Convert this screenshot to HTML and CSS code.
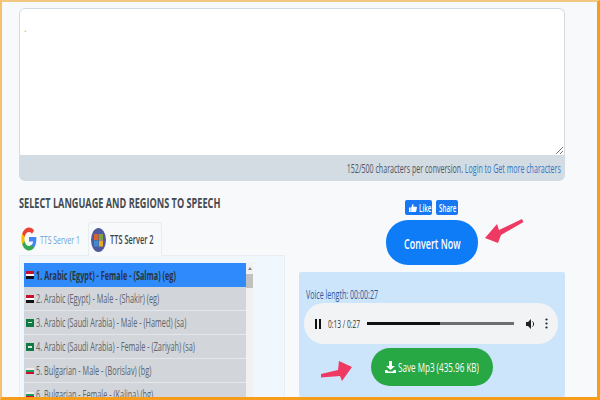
FILE: index.html
```html
<!DOCTYPE html>
<html lang="en">
<head>
<meta charset="utf-8">
<title>TTS</title>
<link rel="stylesheet" href="styles.css">
</head>
<body>
<div class="frame">
  <section class="editor">
    <div class="textbox"><span class="caret">.</span>
      <svg class="grip" width="7" height="7" viewBox="0 0 7 7"><path d="M0 7 7 0M4 7 7 4" stroke="#777" fill="none"/></svg>
    </div>
    <div class="editor-foot"><span class="narrow">152/500 characters per conversion. <a class="link">Login to Get more characters</a></span></div>
  </section>
  <div class="columns">
    <section class="left">
      <h2 class="heading"><span class="narrow">SELECT LANGUAGE AND REGIONS TO SPEECH</span></h2>
      <div class="tabs">
        <div class="tab">
          <svg class="g-logo" width="16" height="24" viewBox="0 0 48 48" preserveAspectRatio="none">
            <path fill="#4285F4" d="M46 24.500c0-1.600-.14-3.100-.4-4.500H24v8.800h12.400c-.5 2.900-2.100 5.300-4.600 7v5.800h7.400C43.500 37.600 46 31.600 46 24.500z"/>
            <path fill="#34A853" d="M24 47c6.200 0 11.400-2 15.200-5.500l-7.400-5.800c-2 1.400-4.700 2.200-7.800 2.200-6 0-11.100-4-12.900-9.500H3.500v6C7.300 42 15 47 24 47z"/>
            <path fill="#FBBC05" d="M11.100 28.400c-.5-1.400-.7-2.900-.7-4.400s.3-3 .7-4.400v-6H3.500C2 16.700 1 20.200 1 24s1 7.300 2.500 10.400z"/>
            <path fill="#EA4335" d="M24 10.100c3.400 0 6.400 1.200 8.800 3.400l6.600-6.600C35.400 3.200 30.200 1 24 1 15 1 7.300 6 3.500 13.600l7.600 6C12.900 14.100 18 10.100 24 10.100z"/>
          </svg>
          <span class="narrow tab-link">TTS Server 1</span>
        </div>
        <div class="tab tab-active">
          <svg class="ms-logo" width="15" height="24" viewBox="0 0 15 24">
            <ellipse cx="7.500" cy="12" rx="7.500" ry="12" fill="#4f5a9e"/>
            <rect x="3" y="6" width="4.500" height="6" fill="#d9622b"/>
            <rect x="8" y="6" width="4" height="6" fill="#7fa33a"/>
            <rect x="3" y="12.500" width="4.500" height="6" fill="#3d8bc9"/>
            <rect x="8" y="12.500" width="4" height="6" fill="#e5ad2b"/>
          </svg>
          <span class="narrow tab-label">TTS Server 2</span>
        </div>
      </div>
      <div class="panel">
        <div class="listbox">
          <ul class="voices">
            <li class="voice voice-on"><svg class="flag" width="8" height="8" viewBox="0 0 8 8"><rect width="8" height="3" fill="#c8102e"/><rect y="3" width="8" height="2" fill="#fff"/><rect y="5" width="8" height="3" fill="#111"/></svg><span class="narrow">1. Arabic (Egypt) - Female - (Salma) (eg)</span></li>
            <li class="voice"><svg class="flag" width="8" height="8" viewBox="0 0 8 8"><rect width="8" height="3" fill="#c8102e"/><rect y="3" width="8" height="2" fill="#fff"/><rect y="5" width="8" height="3" fill="#111"/></svg><span class="narrow">2. Arabic (Egypt) - Male - (Shakir) (eg)</span></li>
            <li class="voice"><svg class="flag" width="8" height="8" viewBox="0 0 8 8"><rect width="8" height="8" fill="#0f7a43"/><rect x="2" y="3" width="4" height="1" fill="#d8eadf"/></svg><span class="narrow">3. Arabic (Saudi Arabia) - Male - (Hamed) (sa)</span></li>
            <li class="voice"><svg class="flag" width="8" height="8" viewBox="0 0 8 8"><rect width="8" height="8" fill="#0f7a43"/><rect x="2" y="3" width="4" height="2" fill="#d8eadf"/></svg><span class="narrow">4. Arabic (Saudi Arabia) - Female - (Zariyah) (sa)</span></li>
            <li class="voice"><svg class="flag" width="8" height="8" viewBox="0 0 8 8"><rect y="1" width="8" height="2" fill="#eee"/><rect y="3" width="8" height="2" fill="#1c9a5c"/><rect y="5" width="8" height="2" fill="#c8102e"/></svg><span class="narrow">5. Bulgarian - Male - (Borislav) (bg)</span></li>
            <li class="voice"><svg class="flag" width="8" height="8" viewBox="0 0 8 8"><rect y="1" width="8" height="2" fill="#eee"/><rect y="3" width="8" height="2" fill="#1c9a5c"/><rect y="5" width="8" height="2" fill="#c8102e"/></svg><span class="narrow">6. Bulgarian - Female - (Kalina) (bg)</span></li>
          </ul>
          <div class="scrollbar"><span class="scroll-up"></span><span class="thumb"></span></div>
        </div>
      </div>
    </section>
    <section class="right">
      <div class="social">
        <span class="fb fb-like"><svg width="8" height="8" viewBox="0 0 8 8"><path fill="#fff" d="M0 3.500h1.700V8H0zM2.200 3.500 3.600 0c.7 0 1 .5.900 1.200L4.300 2.800H7c.8 0 1 .5.900 1L7.200 7.300C7 7.800 6.700 8 6.200 8H2.200z"/></svg><span class="narrow">Like</span></span>
        <span class="fb fb-share"><span class="narrow">Share</span></span>
      </div>
      <div class="convert-row">
        <button class="convert"><span class="narrow">Convert Now</span></button>
        <svg class="arrow arrow-convert" width="39" height="26" viewBox="0 0 39 26"><path fill="#ee3a63" d="M0 20 12 6 14 12 37 1 38.500 4 16 17 13 25Z"/></svg>
      </div>
      <div class="result">
        <p class="length"><span class="narrow">Voice length: 00:00:27</span></p>
        <div class="player">
          <svg class="pause" width="8" height="10" viewBox="0 0 8 10"><path fill="#111" d="M1 0h2v10H1zM5 0h2v10H5z"/></svg>
          <span class="time"><span class="narrow">0:13 / 0:27</span></span>
          <div class="track"><span class="track-fill"></span></div>
          <svg class="volume" width="10" height="10" viewBox="0 0 10 10"><path fill="#222" d="M0 3h2l3-3v10L2 7H0z"/><path fill="none" stroke="#222" d="M6.500 2.500c1.500 1.200 1.500 3.800 0 5"/></svg>
          <svg class="dots" width="3" height="11" viewBox="0 0 3 11"><circle cx="1.500" cy="1.500" r="1.100" fill="#222"/><circle cx="1.500" cy="5.500" r="1.100" fill="#222"/><circle cx="1.500" cy="9.500" r="1.100" fill="#222"/></svg>
        </div>
        <div class="save-row">
          <svg class="arrow arrow-save" width="33" height="22" viewBox="0 0 33 22"><path fill="#ee3a63" d="M1 14 18 10 19 1 32 7 22 21 20 16 1 17.500Z"/></svg>
          <button class="save"><svg class="save-icon" width="11" height="12" viewBox="0 0 11 12"><path fill="#fff" d="M4 0h3v5h3L5.500 9 1 5h3zM0 9h2l1.500 1.500h4L9 9h2v3H0z"/></svg><span class="narrow">Save Mp3 (435.96 KB)</span></button>
        </div>
      </div>
    </section>
  </div>
</div>
</body>
</html>
```

FILE: styles.css
```css
* { box-sizing: border-box; }
html, body { margin: 0; padding: 0; }
body {
  width: 600px;
  height: 400px;
  overflow: hidden;
  font-family: "Open Sans", "Liberation Sans", sans-serif;
  background: #f8f9fa;
}
svg { flex: none; }
.frame {
  width: 600px;
  height: 400px;
  overflow: hidden;
  padding: 6px 32px 0 17px;
  border-style: solid;
  border-width: 2px 3px 3px 2px;
  border-color: #f0c880 #f89c1c #f89c1c #f5c070;
  background: #f8f9fa;
}
.narrow {
  display: inline-block;
  transform: scaleX(0.6);
  transform-origin: left center;
  white-space: nowrap;
}
.editor {
  width: 546px;
  height: 173px;
  display: flex;
  flex-direction: column;
}
.textbox {
  position: relative;
  height: 147px;
  background: #fff;
  border: 1px solid #d3dbe3;
  border-bottom: 0;
  border-radius: 6px 6px 0 0;
  padding: 12px 4px;
  font-size: 10px;
  color: #c9a97a;
}
.grip { position: absolute; right: 1px; bottom: 1px; }
.editor-foot {
  height: 26px;
  background: #d3dbe3;
  border-radius: 0 0 6px 6px;
  padding: 0 4px 0 0;
  display: flex;
  align-items: center;
  justify-content: flex-end;
  font-size: 11.800px;
  color: #4f5660;
  width: 546px;
}
.editor-foot .narrow { transform-origin: right center; }
.link { color: #2f78c6; }
.columns {
  display: flex;
  height: 216px;
}
.left { width: 266px; flex: none; }
.heading {
  margin: 14px 0 0;
  height: 16px;
  font-size: 14px;
  line-height: 16px;
  font-weight: 700;
  color: #444b52;
}
.heading .narrow { transform: scaleX(0.653); }
.tabs {
  display: flex;
  margin-top: 11px;
  height: 34px;
  position: relative;
  z-index: 1;
}
.tab {
  display: flex;
  align-items: center;
  gap: 3px;
  padding: 0 0 0 2px;
  width: 69px;
  font-size: 11.600px;
  height: 34px;
  flex: none;
}
.tab-link { color: #6d9fd8; }
.tab-active {
  width: 74px;
  padding-left: 2px;
  background: #f8f9fa;
  border: 1px solid #e8edf2;
  border-bottom: 0;
  border-radius: 4px 4px 0 0;
  gap: 4px;
}
.tab-label { color: #3c4248; font-weight: 600; }
.tab-active .narrow { transform: scaleX(0.64); }
.panel {
  height: 150px;
  background: #f0f7fd;
  border: 1px solid #e8eef4;
  padding: 7px 31px 0 4px;
  margin-top: -1px;
}
.listbox {
  display: flex;
  width: 230px;
  height: 140px;
}
.voices {
  list-style: none;
  margin: 0;
  padding: 0;
  width: 222px;
  flex: none;
}
.voice {
  height: 24px;
  background: #d2d6db;
  border-bottom: 1px solid #e4e7ea;
  display: flex;
  align-items: center;
  gap: 2px;
  padding-left: 2px;
  font-size: 12.200px;
  color: #5d646b;
  white-space: nowrap;
}
.voice-on {
  background: #2f8bfb;
  color: #2a3440;
  font-weight: 700;
  border-bottom: 0;
}
.scrollbar {
  width: 7px;
  background: #f1f1f1;
  display: flex;
  flex-direction: column;
  align-items: center;
}
.scroll-up {
  width: 0;
  height: 0;
  margin: 4px 0 4px;
  border: 2px solid transparent;
  border-top: 0;
  border-bottom: 3px solid #888;
}
.thumb {
  width: 7px;
  height: 14px;
  background: #c1c1c1;
}
.right {
  width: 266px;
  margin-left: 14px;
  flex: none;
  display: flex;
  flex-direction: column;
  align-items: stretch;
}
.social {
  display: flex;
  justify-content: center;
  gap: 4px;
  margin-top: 19px;
  height: 16px;
  padding-right: 2px;
}
.fb {
  display: flex;
  align-items: center;
  gap: 2px;
  height: 15px;
  background: #1877f2;
  color: #fff;
  font-size: 10.400px;
  font-weight: 600;
  border-radius: 2px;
}
.fb-like { width: 27px; padding-left: 4px; }
.fb-share { width: 22px; padding-left: 3px; }
.convert-row {
  position: relative;
  margin-top: 5px;
  display: flex;
  justify-content: center;
}
.convert {
  width: 92px;
  height: 45px;
  border: 0;
  border-radius: 22px;
  background: #0d7cf6;
  color: #fff;
  font-family: inherit;
  font-size: 15px;
  font-weight: 600;
  padding: 0 0 0 18px;
  text-align: left;
}
.arrow { position: absolute; }
.arrow-convert { left: 186px; top: -2px; }
.result {
  margin-top: 7px;
  height: 130px;
  background: #cce5fb;
  border-radius: 2px;
  padding: 15px 6px 0 7px;
}
.length {
  margin: 0;
  font-size: 11.800px;
  line-height: 14px;
  color: #2d5a9a;
}
.player {
  margin: 2px 0 0 -2px;
  height: 41px;
  width: 254px;
  background: #f1f3f4;
  border-radius: 20px;
  display: flex;
  align-items: center;
  padding: 0 10px;
}
.time {
  font-size: 11px;
  color: #333;
  width: 38px;
  margin-left: 6px;
}
.track {
  width: 148px;
  height: 3px;
  background: #6e6e6e;
  margin-right: 12px;
  margin-left: 1px;
}
.track-fill { display: block; width: 73px; height: 3px; background: #111; }
.dots { margin-left: 9px; }
.save-row {
  position: relative;
  display: flex;
  justify-content: center;
  margin-top: 4px;
  padding-right: 1px;
}
.arrow-save { left: 14px; top: 12px; }
.save {
  width: 122px;
  height: 38px;
  border: 0;
  border-radius: 19px;
  background: #28a745;
  color: #fff;
  font-family: inherit;
  font-size: 13.500px;
  font-weight: 500;
  display: flex;
  align-items: center;
  gap: 2px;
  padding: 0 0 0 14px;
  text-align: left;
}
```
